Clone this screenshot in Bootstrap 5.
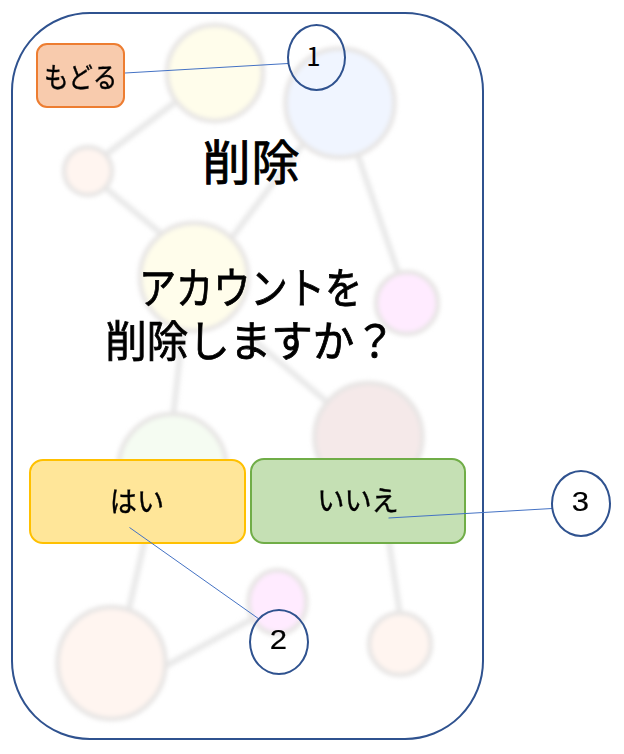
<!DOCTYPE html>
<html lang="ja">
<head>
<meta charset="utf-8">
<meta name="viewport" content="width=device-width, initial-scale=1">
<title>アカウント削除</title>
<link href="https://cdn.jsdelivr.net/npm/bootstrap@5.3.0/dist/css/bootstrap.min.css" rel="stylesheet">
<style>
body { background: #fff; color: #000; font-family: "Noto Sans CJK JP", sans-serif; }
.stage { width: 624px; height: 754px; padding: 12px 0 0 11px; }
.phone { width: 473px; height: 728px; border: 2px solid #2f528f; border-radius: 79px; padding: 29px 16px 0; -webkit-text-stroke: .4px #000; }
.overlay-art { left: 0; top: 0; width: 624px; height: 754px; pointer-events: none; }
.phone > :not(svg) { position: relative; }
.tile, .tile:hover { color: #000; border-width: 2px; line-height: 1; white-space: nowrap; padding: 0; }
.tile-back, .tile-back:hover { width: 89px; height: 65px; margin-left: 7px; border-radius: 11px; background: #f8cbad; border-color: #ed7d31; font-size: 28px; }
.tile-yes, .tile-yes:hover { width: 217px; height: 85px; border-radius: 14px; background: #ffe699; border-color: #ffc000; font-size: 28px; margin-top: 1px; padding-bottom: 4px; }
.tile-no, .tile-no:hover { width: 216px; height: 86px; border-radius: 14px; background: #c5e0b4; border-color: #70ad47; font-size: 28px; padding-bottom: 4px; }
.heading { font-size: 48px; line-height: 60px; margin: 21px 0 0 8px; font-weight: 400; letter-spacing: 1px; -webkit-text-stroke-width: .9px; }
.message { font-size: 43px; line-height: 53px; margin: 70px 0 0 6px; height: 106px; -webkit-text-stroke-width: .8px; }
.message span { display: block; white-space: nowrap; transform-origin: center; }
.line-a { transform: scaleX(.865); }
.line-b { transform: scaleX(.965); }
.choices { margin-top: 93px; gap: 4px; }
.squeeze { display: inline-block; transform: scaleX(.88); }
.tile-yes .squeeze, .tile-no .squeeze { transform: scaleX(.97); }
.callout { border: 2px solid #2f528f; border-radius: 50%; font: 27px/1 "Liberation Sans", sans-serif; -webkit-text-stroke: .2px #000; }
.callout span { display: inline-block; transform: scaleX(1.15); }
.callout-one { left: 287px; top: 24px; width: 59px; height: 67px; font: 25px/1 "Noto Sans CJK JP", sans-serif; padding: 0 6px 5px 0; }
.callout-one span { transform: none; }
.callout-two { left: 249px; top: 609px; width: 60px; height: 66px; padding-bottom: 4px; }
.callout-three { left: 551px; top: 470px; width: 60px; height: 67px; padding-bottom: 3px; }
</style>
<script src="https://cdn.jsdelivr.net/npm/bootstrap@5.3.0/dist/js/bootstrap.bundle.min.js"></script>
</head>
<body>
<main class="stage position-relative overflow-hidden">
  <svg class="overlay-art position-absolute" viewBox="0 0 624 754" aria-hidden="true">
    <defs><filter id="soft" x="-10%" y="-10%" width="120%" height="120%" color-interpolation-filters="sRGB"><feGaussianBlur stdDeviation="2"/></filter></defs>
    <g filter="url(#soft)" stroke="#e9e9e9" stroke-width="6">
      <path fill="none" d="M178 100L104 156M102 185L164 236M302 145L230 240M356 150L399 275M183 328L173 418M250 337L333 407M146 535L128 613M160 669L254 618M388 535L400 615"/>
      <g stroke="#e7e5e4" stroke-width="4.500">
        <circle cx="215" cy="73" r="48" fill="#fffdeb"/>
        <circle cx="340" cy="103" r="54.500" fill="#f0f5ff"/>
        <circle cx="88" cy="171" r="24" fill="#fff5f0"/>
        <circle cx="194" cy="277" r="54" fill="#fffdeb"/>
        <circle cx="407" cy="303" r="31" fill="#ffebff"/>
        <circle cx="368.500" cy="437" r="54" fill="#f5e9e9"/>
        <circle cx="172.500" cy="468" r="54" fill="#f5fcf2"/>
        <ellipse cx="111.500" cy="663" rx="54" ry="56" fill="#fff5f0"/>
        <ellipse cx="277.500" cy="602" rx="29" ry="32" fill="#ffebff"/>
        <circle cx="400" cy="644" r="31" fill="#fff5f0"/>
      </g>
    </g>
  </svg>
  <section class="phone position-relative">
    <button type="button" class="btn tile tile-back d-flex align-items-center justify-content-center"><span class="squeeze">もどる</span></button>
    <h1 class="heading text-center">削除</h1>
    <p class="message text-center"><span class="line-a">アカウントを</span><span class="line-b">削除しますか？</span></p>
    <div class="choices d-flex">
      <button type="button" class="btn tile tile-yes flex-shrink-0"><span class="squeeze">はい</span></button>
      <button type="button" class="btn tile tile-no flex-shrink-0"><span class="squeeze">いいえ</span></button>
    </div>
  </section>
  <svg class="overlay-art position-absolute" viewBox="0 0 624 754" aria-hidden="true">
    <path d="M125 73L288 63.500M129.500 527.500L259 619M388.500 518L552 508.500" fill="none" stroke="#4472c4"/>
  </svg>
  <div class="callout callout-one position-absolute d-flex align-items-center justify-content-center"><span>1</span></div>
  <div class="callout callout-two position-absolute d-flex align-items-center justify-content-center"><span>2</span></div>
  <div class="callout callout-three position-absolute d-flex align-items-center justify-content-center"><span>3</span></div>
</main>
</body>
</html>
